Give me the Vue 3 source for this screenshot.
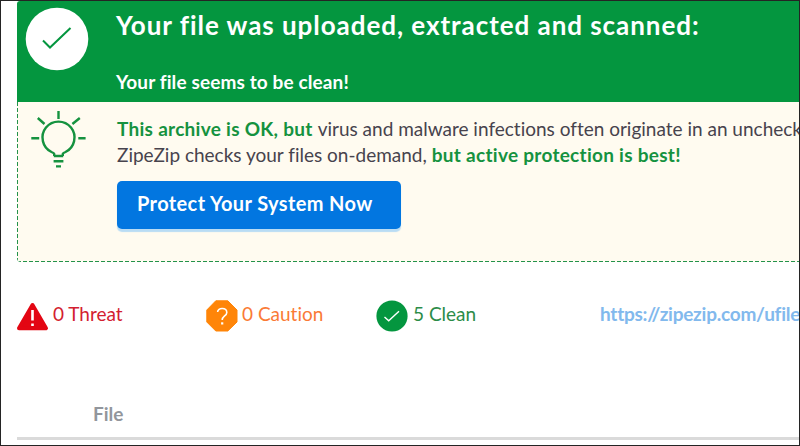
<template>
  <div class="page">
    <section class="result">
      <header class="result-head">
        <svg class="result-icon" viewBox="0 0 64 64">
          <circle cx="32" cy="32" r="31.3" fill="#fff" />
          <path d="M18 33.5 L25 40.5 L45.5 21" fill="none" stroke="#04963f" stroke-width="2" />
        </svg>
        <div class="result-titles">
          <h1>Your file was uploaded, extracted and scanned:</h1>
          <p>Your file seems to be clean!</p>
        </div>
      </header>
      <div class="advice">
        <svg class="bulb" viewBox="0 0 56 60">
          <g fill="none" stroke="#15923f" stroke-width="2.4">
            <path d="M23.2 46 V43.8 Q23 43 20.5 42 A16 16 0 1 1 34.5 42 Q32 43 31.8 43.8 V46" />
            <path d="M22.8 46 H32.2 M22.6 51.2 H32.4 M25 56.4 H30" />
            <path d="M27.5 1 V9 M.3 28.3 H8.2 M47.3 28.3 H54.6 M6.8 8 L13.5 14 M41.4 14 L48.8 8" />
          </g>
        </svg>
        <div class="advice-body">
          <div class="line"><b>This archive is OK, but</b><span>virus and malware infections often originate in an uncheck</span></div>
          <div class="line"><span>ZipeZip checks your files on-demand,</span><b>but active protection is best!</b></div>
          <button class="protect"><span>Protect Your System Now</span></button>
        </div>
      </div>
    </section>

    <div class="summary">
      <div v-for="item in counts" :key="item.type" class="count" :class="item.type">
        <svg v-if="item.type === 'threat'" class="count-icon" viewBox="0 0 32 32">
          <path d="M15.5 5 L29 28.2 H2 Z" fill="#e30613" stroke="#e30613" stroke-width="4" stroke-linejoin="round" />
          <path d="M15.5 10 V20.5 M15.5 23.5 V26" stroke="#fff" stroke-width="2.6" />
        </svg>
        <svg v-else-if="item.type === 'caution'" class="count-icon" viewBox="0 0 32 32">
          <path d="M9.8 .8 H21.8 L31 10 V22 L21.8 31 H9.8 L.8 22 V10 Z" fill="#ff8508" stroke="#ff8508" stroke-linejoin="round" />
          <path d="M11.6 12 C11.6 7.2 20.8 7.2 20.8 12.4 C20.8 16 16.2 16 16.2 20" fill="none" stroke="#fff" stroke-width="1.6" />
          <path d="M16.2 22.3 V24.5" stroke="#fff" stroke-width="2.2" />
        </svg>
        <svg v-else class="count-icon" viewBox="0 0 32 32">
          <circle cx="16" cy="16" r="15.6" fill="#04963f" />
          <path d="M8.5 17 L12.7 20.8 L23 11.3" fill="none" stroke="#fff" stroke-width="1.4" />
        </svg>
        <span>{{ item.text }}</span>
      </div>
      <a class="link">https://zipezip.com/ufile</a>
    </div>

    <div class="table-head"><span>File</span></div>
  </div>
</template>

<script setup>
const counts = [
  { type: 'threat', text: '0 Threat' },
  { type: 'caution', text: '0 Caution' },
  { type: 'clean', text: '5 Clean' },
];
</script>

<style>
body {
  margin: 0;
  overflow: hidden;
}
</style>

<style scoped>
.page {
  box-sizing: border-box;
  width: 800px;
  height: 446px;
  padding-left: 16px;
  border: 1px solid #242424;
  background: #fff;
  font-family: Lato, "Open Sans", sans-serif;
  font-size: 19px;
  font-variant-ligatures: none;
  white-space: nowrap;
  overflow: hidden;
}

.result-head {
  display: flex;
  box-sizing: border-box;
  height: 101px;
  padding: 6px 0 0 8px;
  border-radius: 3px 0 0 0;
  background: #04963f;
  color: #fff;
}

.result-icon {
  flex: none;
  width: 64px;
  height: 64px;
  margin-right: 27px;
}

h1 {
  margin: 2px 0 0;
  font-size: 26px;
  line-height: 32px;
  font-weight: 700;
  letter-spacing: 0.95px;
}

.result-titles p {
  margin: 29px 0 0;
  font-size: 19px;
  line-height: 24px;
  font-weight: 700;
  letter-spacing: 0.12px;
}

.advice {
  display: flex;
  box-sizing: border-box;
  height: 160px;
  padding: 9px 0 0 15px;
  border-radius: 0 0 0 4px;
  /* dashed edges on the left and bottom */
  background:
    repeating-linear-gradient(180deg, #23924a 0 4px, transparent 4px 6px) left top / 1px 100% no-repeat,
    repeating-linear-gradient(90deg, #23924a 0 4px, transparent 4px 6px) left bottom / 100% 1px no-repeat,
    #fffbf0;
  color: #47434d;
}

.bulb {
  flex: none;
  width: 56px;
  height: 60px;
  margin: -1px 30px 0 -1px;
}

.advice-body {
  padding-top: 5px;
}

.line {
  display: flex;
  gap: 5px;
  line-height: 26px;
}

.line b {
  color: #15923f;
  letter-spacing: 0.28px;
}

.protect {
  display: flex;
  align-items: center;
  box-sizing: border-box;
  width: 284px;
  height: 48px;
  margin: 13px 0 0;
  padding: 0 0 4px 20px;
  border: 0;
  border-radius: 5px;
  background: #0276e0;
  box-shadow: 0 3px 1px #b9dcf4;
  color: #fff;
  font: 700 20px Lato, sans-serif;
  letter-spacing: 0.38px;
}

.summary {
  display: flex;
  align-items: center;
  height: 32px;
  margin-top: 38px;
}

.count {
  display: flex;
  flex: none;
  align-items: center;
  gap: 4px;
}

.count span,
.link {
  padding-bottom: 5px;
}

.count-icon {
  width: 32px;
  height: 32px;
}

.threat {
  width: 189px;
  color: #d3202f;
}

.caution {
  width: 170px;
  color: #fa7a35;
}

.clean {
  gap: 5px;
  width: 224px;
  color: #2c8c48;
}

.link {
  color: #82b9ed;
  font-weight: 700;
  letter-spacing: -0.25px;
}

.table-head {
  box-sizing: border-box;
  height: 58px;
  margin-top: 50px;
  padding: 19px 0 0 76px;
  border-bottom: 3px solid #dadada;
  color: #92969c;
  font-weight: 700;
  line-height: 26px;
}
</style>
